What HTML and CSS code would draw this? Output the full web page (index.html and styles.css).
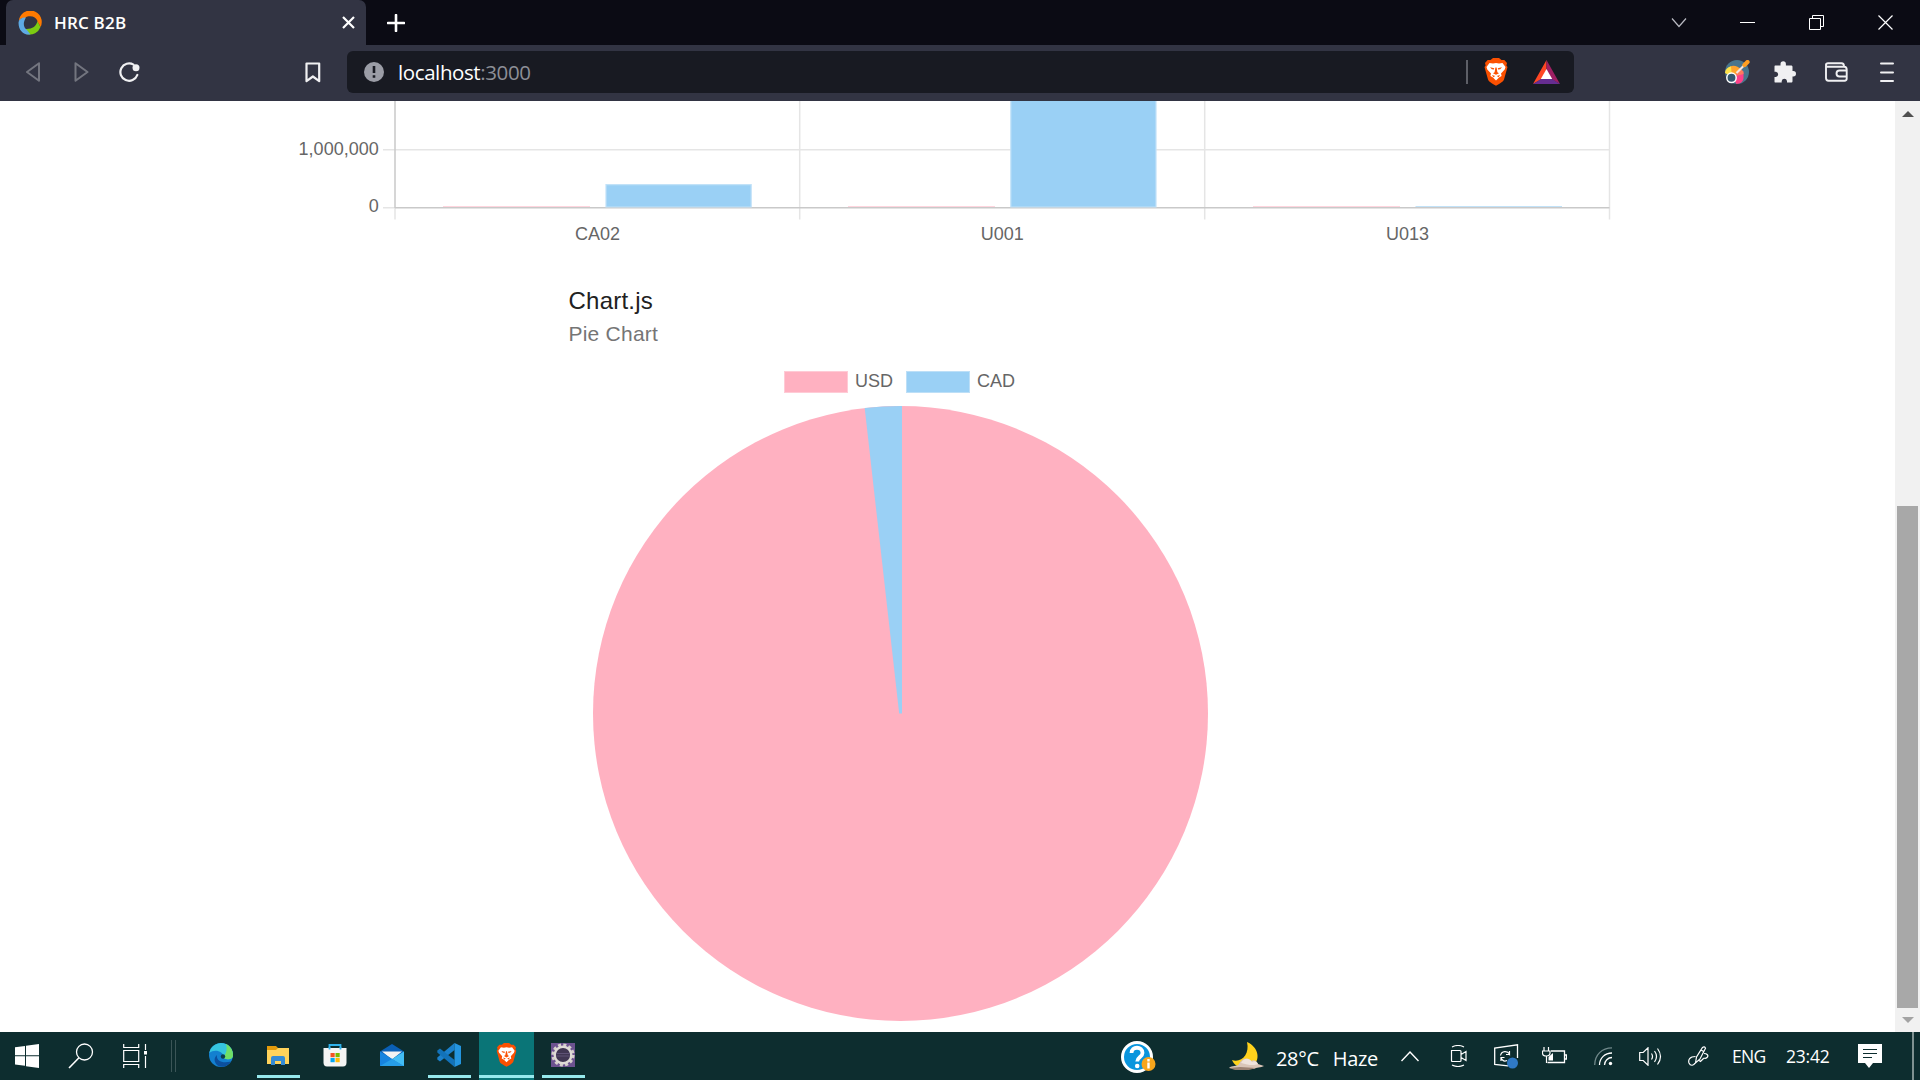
FILE: index.html
```html
<!DOCTYPE html>
<html lang="en">
<head>
<meta charset="utf-8">
<title>HRC B2B</title>
<link rel="stylesheet" href="styles.css">
</head>
<body>
<svg class="defs" width="0" height="0">
  <symbol id="lion" viewBox="0 0 24 28">
    <path fill="#fb5001" d="M6.500 2 9 0h6l2.500 2h2.800L23 5l-.6 2.600L23.500 9 20 21.500c-.5 1.500-1.500 2.500-8 6.300C5.500 24 4.500 23 4 21.500L.5 9l1.100-1.400L1 5l2.700-3z"/>
    <path fill="#fff" d="M5.500 5 9 5.600l3-.6 3 .6 3.500-.6L21.500 9l-.8 2.500L17 15.500l.6 2.500L15 19.500 12 22.500 9 19.500 6.400 18l.6-2.500-3.700-4L2.500 9z"/>
    <path fill="#fb5001" d="m6 9.300 4.200.9-.2 1.300-2.200-.2zM18 9.300l-4.200.9.200 1.300 2.200-.2zM11.400 9.500h1.200l.8 4.700 1.600 1-3 1.600-3-1.600 1.600-1zM8 17l3.300 1-2 1.200zM16 17l-3.300 1 2 1.200z"/>
  </symbol>
</svg>

<header class="titlebar">
  <div class="tab">
    <svg class="favicon" width="24" height="24" viewBox="0 0 24 24">
      <path fill="#7ccb12" d="M9 23.200A11.500 11.500 0 0 0 22.500 16L19.500 10c-1 5-5 8-11 8-3 0-2 3 .5 5.200z"/>
      <path fill="#ff7a00" d="M.8 10A11.500 11.500 0 1 1 22.600 16c-.6-2-1.800-3-2.800-5A8 8 0 0 0 7 7C4.500 6.500 2 7.500.8 10z"/>
      <path fill="#5eaae4" d="M.6 11C1.200 7.500 4.500 6 8 6.500 4.500 12 5.500 17 9 19l3.500 4.500C5 24.500 0 18.500.6 11z"/>
    </svg>
    <span class="tab-title">HRC B2B</span>
    <svg class="tab-close" width="13" height="13" viewBox="0 0 13 13"><path d="m1 1 11 11M12 1 1 12" stroke="#fff" stroke-width="2.200"/></svg>
  </div>
  <svg class="new-tab" width="18" height="18" viewBox="0 0 18 18"><path d="M9 1v16M1 9h16" stroke="#fff" stroke-width="2.600" stroke-linecap="round"/></svg>
  <div class="window-buttons">
    <svg width="16" height="16" viewBox="0 0 16 16"><path d="m1 3.500 7 8 7-8" fill="none" stroke="#b9bac2" stroke-width="1.200"/></svg>
    <svg width="16" height="16" viewBox="0 0 16 16"><path d="M0 7.500h15" stroke="#fff"/></svg>
    <svg width="16" height="16" viewBox="0 0 16 16"><path d="M.5 3.500h11v11H.5zM3.500 3V.500h11v11H12" fill="none" stroke="#fff"/></svg>
    <svg width="16" height="16" viewBox="0 0 16 16"><path d="m.5.500 14 14M14.500.500l-14 14" stroke="#fff" stroke-width="1.200"/></svg>
  </div>
</header>

<nav class="toolbar">
  <svg class="back" width="16" height="20" viewBox="0 0 16 20"><path d="M14 1.200v17.600L2 10z" fill="none" stroke="#73757f" stroke-width="2" stroke-linejoin="round"/></svg>
  <svg class="forward" width="16" height="20" viewBox="0 0 16 20"><path d="M2.500 1.200v17.600L14.500 10z" fill="none" stroke="#73757f" stroke-width="2" stroke-linejoin="round"/></svg>
  <svg class="reload" width="21" height="21" viewBox="0 0 21 21"><path d="M14.500 2.600A8.700 8.700 0 1 0 18.300 13" fill="none" stroke="#f0f0f2" stroke-width="2.200" stroke-linecap="round"/><circle cx="17" cy="5.700" r="3.500" fill="#f0f0f2"/></svg>
  <svg class="bookmark" width="16" height="21" viewBox="0 0 16 21"><path d="M1.500 1.500h12.700v17.700l-6.300-4.700-6.400 4.700z" fill="none" stroke="#f0f0f2" stroke-width="2.200" stroke-linejoin="round"/></svg>
  <div class="address">
    <svg width="20" height="20" viewBox="0 0 20 20"><circle cx="10" cy="10" r="10" fill="#9b9da6"/><path d="M10 4v7M10 13.200v2.600" stroke="#181a22" stroke-width="2.600"/></svg>
    <span class="url">localhost<span class="port">:3000</span></span>
    <span class="address-rule"></span>
    <svg class="shield" width="24" height="28"><use href="#lion"/></svg>
    <svg class="rewards" width="27" height="24" viewBox="0 0 27 24"><path fill="#ff4724" d="M13.500 0 0 24l9.500-5.500 4-8z"/><path fill="#9e1f63" d="m13.500 0 13.500 24-9.500-5.500-4-8z"/><path fill="#662d91" d="M0 24h27l-8-5H8z"/><path fill="#fff" d="m13.500 9 5.700 10H7.800z"/></svg>
  </div>
  <svg class="picker" width="25" height="25" viewBox="0 0 25 25">
    <circle cx="12" cy="12" r="12" fill="#49758d"/>
    <path fill="#ff4088" d="m7 17 11.500-4.500V18c0 3-3 6-7 6z"/><path fill="#ff7a5f" d="m7 17 7-9.500 4.500 4V14z"/><path fill="#ffa42d" d="M7 17 5 6.500C9 5 13 6 16 10z"/><path fill="#ffe24a" d="M7 17 0 13c0-3 2.500-6 6-6.500z"/>
    <circle cx="6.500" cy="17.800" r="4.700" fill="#35576e" stroke="#fff" stroke-width="1.500"/>
    <path d="m11.500 13 8-8" stroke="#f7e6df" stroke-width="2.200"/><path d="m19.500 5 3-3" stroke="#ff9f22" stroke-width="4.200" stroke-linecap="round"/>
  </svg>
  <svg class="puzzle" width="22" height="22" viewBox="0 0 22 22"><path fill="#f0f0f2" d="M1.500 4.500h5V3a2.700 2.700 0 0 1 5.400 0v1.500H17c1 0 1.500.5 1.500 1.500v4h.8a2.700 2.700 0 0 1 0 5.400h-.8V20c0 1-.5 1.500-1.500 1.500h-4V20a2.700 2.700 0 0 0-5.300 0v1.500H1.500C.5 21.500.5 21 .5 20v-4H2a2.700 2.700 0 0 0 0-5.300H.5V6c0-1 0-1.500 1-1.500z"/></svg>
  <svg class="wallet" width="25" height="20" viewBox="0 0 25 20"><path d="M2 4v12c0 2 1 2.700 2.500 2.700h16c1.500 0 2.200-.8 2.200-2.200v-9c0-2-.8-2.800-2.500-2.800H3.500C1.500 4.700 1.200 1.200 4 1.200h13.500c1.500 0 2.500 1 2.500 3M23 8.500h-7.500a3 3 0 0 0 0 6H23" fill="none" stroke="#f0f0f2" stroke-width="1.900"/></svg>
  <svg class="menu" width="14" height="20" viewBox="0 0 14 20"><path d="M1 1.500h12M1 10.500h12M1 19h12" stroke="#f0f0f2" stroke-width="2" stroke-linecap="round"/></svg>
</nav>

<div class="viewport">
  <main class="page">
    <svg class="bar-chart" width="1330" height="160" viewBox="290 101 1330 160">
      <g class="grid">
        <path d="M383 149.700H1609.500M799.700 101V219.500M1204.700 101V219.500M1609.500 101V219.500M383 207.800H395M395 208V219.500"/>
        <path class="axis" d="M395 101V208M395 207.800H1609.500"/>
      </g>
      <g class="cad">
        <path d="M606 207V184.700h145.200V207z"/>
        <path d="M1010.800 207V90h145.200v117z"/>
      </g>
      <path class="sliver-usd" d="M443 206.500h147M848 206.500h147M1253 206.500h147"/>
      <path class="sliver-cad" d="M1415.500 206.500H1562"/>
      <g class="tick end"><text x="378.700" y="155.300">1,000,000</text><text x="378.700" y="212">0</text></g>
      <g class="tick middle"><text x="597.500" y="240">CA02</text><text x="1002.300" y="240">U001</text><text x="1407.500" y="240">U013</text></g>
    </svg>

    <section class="pie-card">
      <h1>Chart.js</h1>
      <h2>Pie Chart</h2>
      <div class="legend">
        <span class="swatch usd-swatch"></span><span class="series">USD</span>
        <span class="swatch cad-swatch"></span><span class="series">CAD</span>
      </div>
      <svg class="pie" width="618" height="618" viewBox="592 405 618 618">
        <circle cx="900.500" cy="713.500" r="307.500" fill="#ffb1c1"/>
        <path fill="#9ad0f5" d="M902 406V713.500H899.200L864.700 408.100A307.500 307.500 0 0 1 902 406z"/>
      </svg>
    </section>
  </main>
  <aside class="scrollbar">
    <svg width="12" height="6" viewBox="0 0 12 6"><path fill="#505050" d="M6 0 12 6H0z"/></svg>
    <span class="thumb"></span>
    <svg width="12" height="6" viewBox="0 0 12 6"><path fill="#a3a3a3" d="M0 0h12L6 6z"/></svg>
  </aside>
</div>

<footer class="taskbar">
  <div class="system">
    <svg width="24" height="24" viewBox="0 0 24 24"><path fill="#fff" d="m0 3.300 10-1.400v9.400H0zM11 1.700 24 0v11.300H11zM0 12.300h10v9.400L0 20.400zM11 12.300h13V24l-13-1.800z"/></svg>
    <svg width="26" height="26" viewBox="0 0 26 26"><circle cx="16.500" cy="9" r="8" fill="none" stroke="#fff" stroke-width="1.300"/><path d="M11 14.800 1 25" stroke="#fff" stroke-width="1.600"/></svg>
    <svg width="24" height="24" viewBox="0 0 24 24"><path d="M.7 0v3.500h15V0M.7 24v-3.500h15V24M.7 6.500h15v11H.7zM22.500 0v6M22.500 12v12" fill="none" stroke="#fff" stroke-width="1.200"/><path d="M21 7h3v3.500h-3z" fill="#fff"/></svg>
    <span class="divider"></span>
  </div>
  <div class="apps">
    <span class="app">
      <svg width="24" height="24" viewBox="0 0 24 24"><circle cx="12" cy="12" r="12" fill="#1380d0"/><path fill="#36c4df" d="M.2 10A12 12 0 0 1 17 1.100c4 1.900 7 5.900 7 10.900 0 4-3 5-7 4-2-.5-3-1-2.500-2.500C15 9 6 5 .2 10z"/><path fill="#70df66" d="M17 1.100C21 3 24 7 24 12c0 4-3 5-7 4-2-.5-3-1-2.500-2.500 3-3 4-7 2.500-12.400z"/><path fill="#0c4f9e" d="M8 12c-1 5 4 9 14 6.500C18 25 9 26 6 19c-1-3 0-5 2-7z"/><circle cx="14" cy="13.500" r="2.200" fill="#0d3d4d"/></svg>
    </span>
    <span class="app running folder">
      <svg width="24" height="24" viewBox="0 0 24 24"><path fill="#e39b0c" d="M1 3h9l2 2v4H1z"/><path fill="#ffd35b" d="M1 7h9l2-2h11v16H1z"/><path fill="#348bd4" d="M5 22v-7q0-2 2-2h10q2 0 2 2v7h-4v-4H9v4z"/></svg>
    </span>
    <span class="app">
      <svg width="24" height="24" viewBox="0 0 24 24"><path d="M6.500 7V2h11v5" fill="none" stroke="#2fb2ec" stroke-width="1.800"/><path fill="#f4f4f4" d="M.5 5h23v14.500q0 4-3.500 4H4q-3.500 0-3.500-4z"/><path d="M6.500 4v2.500M17.500 4v2.500" stroke="#2fb2ec" stroke-width="1.800"/><path fill="#f35325" d="M7.500 10h4.200v4.200H7.500z"/><path fill="#7aba00" d="M12.500 10h4.200v4.200h-4.200z"/><path fill="#05a6f0" d="M7.500 15h4.200v4.200H7.500z"/><path fill="#ffba08" d="M12.500 15h4.200v4.200h-4.200z"/></svg>
    </span>
    <span class="app">
      <svg width="24" height="24" viewBox="0 0 24 24"><path fill="#0a5fb5" d="M0 8.500 12 1l12 7.500v5H0z"/><path fill="#f3f3f3" d="M2 8.500h20l-10 8z"/><path fill="#1683df" d="m0 8.500 24 14.500H0z"/><path fill="#43bdf5" d="M24 8.500 12 16l11 7h1z"/><path fill="#269de8" d="m0 23 12-7 12 7z"/></svg>
    </span>
    <span class="app running">
      <svg width="24" height="24" viewBox="0 0 24 24"><path fill="#1b80cb" d="M17.500 0v7L3 18.500.3 16.500v-2z"/><path fill="#1272b9" d="M17.500 24v-7L3 5.500.3 7.500v2z"/><path fill="#2495e0" d="m17.500 0 6.500 3v18l-6.500 3z"/></svg>
    </span>
    <span class="app running active"><svg width="21" height="24"><use href="#lion"/></svg></span>
    <span class="app running">
      <svg width="24" height="24" viewBox="0 0 24 24"><path fill="#6c5290" d="M0 0h24v24H0z"/><circle cx="12" cy="12" r="10" fill="none" stroke="#d5d1cc" stroke-width="3.200" stroke-dasharray="3 2.236"/><circle cx="12" cy="12" r="8.300" fill="#403653" stroke="#dedbd6" stroke-width="2.400"/><path d="M5 10.500h14M5 13h14" stroke="#5e5276"/></svg>
    </span>
  </div>
  <div class="tray">
    <svg class="help" width="36" height="36" viewBox="0 0 36 36"><circle cx="16" cy="19" r="14.500" fill="#0995dd" stroke="#fff" stroke-width="3"/><path d="M10.500 15c0-7 11-7 11 0 0 4-5.300 4-5.300 8.500" fill="none" stroke="#fff" stroke-width="3.800"/><circle cx="16.200" cy="28" r="2.300" fill="#fff"/><circle cx="27.500" cy="26" r="7" fill="#f7a51c"/><path d="M27.500 21v2.400M27.500 24.500v6" stroke="#fff" stroke-width="2.400"/></svg>
    <svg class="moon" width="36" height="29" viewBox="0 0 36 29"><path fill="#ffd21c" d="M18 0c12 5 14 19 5 24-7 4-17 2-20-6 9 3 18-5 15-18z"/><path fill="#d9c5b8" d="M0 26c3-3 8-1 10-4 3-6 9-7 12-3 3-2 6 0 7 3l6 2c-3 2-8 1-10 3z"/><path fill="#eee3dc" d="M12 21c3-6 9-5 11-1 3-2 5 0 6 2-4 2-10 1-17-1z"/><path fill="#9a8172" d="m0 26 11-1 16 1-7 2H6z"/></svg>
    <span class="weather">28°C</span><span class="weather sky">Haze</span>
    <svg class="more" width="18" height="11" viewBox="0 0 18 11"><path d="m.5 10 8.500-9 8.500 9" fill="none" stroke="#fff" stroke-width="1.400"/></svg>
    <svg class="camera" width="18" height="22" viewBox="0 0 18 22"><path d="M1.500 5.500h8.500q1 0 1 1v9q0 1-1 1H2.500q-1 0-1-1zM11 9.500l5-3v9l-5-3M2 2q6-3 12 0M2 20q6 3 12 0" fill="none" stroke="#fff" stroke-width="1.200"/></svg>
    <svg class="sync" width="25" height="25" viewBox="0 0 25 25"><path d="M14 21.800.7 20.500V4L23.500.800V14" fill="none" stroke="#fff" stroke-width="1.300"/><path d="M6.500 11.500c1-5 7-5 9-1.500V7M15.500 10.500H12M7 17v-3.500h3.500M7 14c1.500 3 4 3.500 6 2.500" fill="none" stroke="#fff" stroke-width="1.200"/><circle cx="18.500" cy="19" r="5.500" fill="#2f79c5"/></svg>
    <svg class="battery" width="25" height="18" viewBox="0 0 25 18"><path d="M9 4h13.500v11.500h-17M23 8h1.500v4H23" fill="none" stroke="#fff" stroke-width="1.300"/><path d="M2 0v4M6.500 0v4M.5 4h7.500v2Q8 9 4.300 9 .500 9 .500 6zM4.500 9v7" fill="none" stroke="#fff" stroke-width="1.200"/><path fill="#fff" d="M6.500 10 11 6v7.500H6.500z"/></svg>
    <svg class="wifi" width="19" height="19" viewBox="0 0 19 19"><path d="M.7 18C.7 8 8 .800 18 .800" fill="none" stroke="#71898b" stroke-width="1.300"/><path d="M5.500 18C5.500 11 11 6 18 6M10.500 18c0-4 3.500-7.500 7.500-7.500" fill="none" stroke="#fff" stroke-width="1.300"/><circle cx="16.500" cy="16.500" r="1.700" fill="#fff"/></svg>
    <svg class="speaker" width="24" height="19" viewBox="0 0 24 19"><path d="M.7 5.500h3.500L9 .800v17.400l-4.800-4.700H.7zM12.500 6.500q2 3 0 6M15.500 4q4 5.500 0 11M18.500 1.500q6 8 0 16" fill="none" stroke="#fff" stroke-width="1.200"/></svg>
    <svg class="pen" width="21" height="20" viewBox="0 0 21 20"><path d="M7.500 17 8.500 11 14.500 1.500q2-1.500 3 .7L12 13zM13 4l3 1.700M7.500 10.500C1.500 10.500 0 14 1 17c1.500 3.500 5 2.500 6 0M11 14.500l1.500 1 3-3M16 7.500c3 0 5 2 3 4q-1.500 1.500-3.500.5" fill="none" stroke="#fff" stroke-width="1.200"/></svg>
    <span class="language">ENG</span>
    <span class="clock">23:42</span>
    <svg class="notice" width="24" height="25" viewBox="0 0 24 25"><path fill="#fff" d="M0 0h24v19H15l-4 5-4-5H0z"/><path d="M5 5.500h14M5 9.500h14M5 13.500h9" stroke="#0d2d2f" stroke-width="1.200"/></svg>
    <span class="desktop-edge"></span>
  </div>
</footer>
</body>
</html>
```
FILE: styles.css
```css
* { box-sizing: border-box; }
body {
  margin: 0;
  width: 1920px;
  height: 1080px;
  overflow: hidden;
  display: flex;
  flex-direction: column;
  background: #fff;
  font-family: "Open Sans", "Noto Sans", sans-serif;
}
svg { display: block; flex: none; }
.defs { position: absolute; }

/* tab strip */
.titlebar { height: 45px; flex: none; display: flex; align-items: center; background: #0b0b14; padding-left: 6px; }
.tab { width: 360px; height: 45px; display: flex; align-items: center; background: #323443; border-radius: 7px 7px 0 0; padding: 0 11px 0 12px; }
.tab-title { margin-left: 12px; color: #fff; font-size: 17px; font-weight: 600; letter-spacing: .2px; line-height: 24px; }
.tab-close { margin-left: auto; }
.new-tab { margin-left: 21px; }
.window-buttons { margin-left: auto; margin-right: 26px; display: flex; gap: 53px; }

/* toolbar */
.toolbar { height: 56px; flex: none; display: flex; align-items: center; background: #323443; padding: 0 26px 2px 25px; }
.forward { margin-left: 32px; }
.reload { margin-left: 30px; }
.bookmark { margin-left: 165px; }
.address { width: 1227px; height: 42px; margin-left: 26px; padding: 0 14px 0 17px; display: flex; align-items: center; background: #181a22; border-radius: 6px; }
.url { margin-left: 14px; padding-bottom: 1px; color: #fff; font-size: 20.5px; line-height: 28px; letter-spacing: -.4px; }
.port { color: #8d8f97; letter-spacing: -.4px; }
.address-rule { width: 2px; height: 24px; margin-left: auto; background: #5d5f67; }
.shield { margin-left: 16px; }
.rewards { margin-left: 25px; }
.picker { margin-left: 151px; }
.puzzle { margin-left: 24px; }
.wallet { margin-left: 28px; }
.menu { margin-left: auto; }

/* page */
.viewport { height: 931px; flex: none; display: flex; }
.page { width: 1895px; overflow: hidden; font-family: "Liberation Sans", Arial, sans-serif; }
.bar-chart { margin-left: 290px; }
.grid { fill: none; stroke: #e5e5e5; stroke-width: 1.5; }
.axis { stroke: #c9c9c9; }
.cad { fill: #9ad0f5; stroke: #c2e2f8; stroke-width: 1.2; }
.sliver-usd { stroke: #ffd5de; stroke-width: 1.2; }
.sliver-cad { stroke: #c2e2f8; stroke-width: 1.2; }
.tick { font-size: 18px; fill: #666; }
.end { text-anchor: end; }
.middle { text-anchor: middle; }
.pie-card { width: 662px; margin-left: 568.5px; padding-top: 22px; }
.pie-card h1 { margin: 0; color: #212121; font-size: 24px; font-weight: 400; line-height: 36px; letter-spacing: .225px; }
.pie-card h2 { margin: 0; color: #757575; font-size: 21px; font-weight: 400; line-height: 30px; letter-spacing: .225px; }
.legend { display: flex; align-items: center; height: 22px; margin: 22px 0 0 215.5px; color: #666; font-size: 18px; line-height: 20px; }
.series { padding-bottom: 2px; }
.swatch { width: 64px; height: 22px; margin-right: 7px; border: 1px solid; }
.usd-swatch { background: #ffb1c1; border-color: #ffcbd6; }
.cad-swatch { background: #9ad0f5; border-color: #bddff7; margin-left: 13px; }
.pie { margin: 12px 0 0 23.5px; }

.scrollbar { width: 25px; display: flex; flex-direction: column; align-items: center; padding: 10px 0 9px; background: #f1f1f1; }
.thumb { width: 21px; height: 502px; margin-top: auto; margin-bottom: 9px; background: #a8a8a8; }

/* taskbar */
.taskbar { height: 48px; flex: none; display: flex; background: #0d2d2f; color: #fff; }
.system { width: 193px; display: flex; align-items: center; padding-left: 15px; gap: 29px; }
.divider { width: 5px; height: 32px; border: solid #3b5557; border-width: 0 1px; margin-left: -5px; }
.apps { display: flex; gap: 2px; padding-left: 1px; }
.app { width: 55px; height: 48px; display: flex; align-items: flex-start; justify-content: center; padding: 11px 1px 0 0; }
.running { background: linear-gradient(#96e9ed, #96e9ed) 50% 43px / 43px 3px no-repeat; }
.active { background: linear-gradient(#0000 43px, #96e9ed 43px 46px, #0000 46px) #0a7577; }
.tray { margin-left: auto; display: flex; align-items: center; height: 48px; }
.moon { margin-left: 72px; }
.weather { margin-left: 11px; font-size: 20px; line-height: 28px; letter-spacing: -.3px; padding-top: 5px; }
.sky { margin-left: 14px; }
.more { margin-left: 23px; }
.camera { margin-left: 31px; }
.sync { margin-left: 26px; }
.battery { margin-left: 23px; }
.wifi { margin-left: 27px; }
.speaker { margin-left: 26px; }
.pen { margin-left: 25px; }
.language { width: 54px; margin-left: 23px; font-size: 17.5px; line-height: 24px; letter-spacing: -.7px; }
.clock { width: 72px; font-size: 17.5px; line-height: 24px; letter-spacing: -.2px; }
.desktop-edge { width: 2px; height: 48px; margin: 0 6px 0 30px; background: #7f9292; }
```
